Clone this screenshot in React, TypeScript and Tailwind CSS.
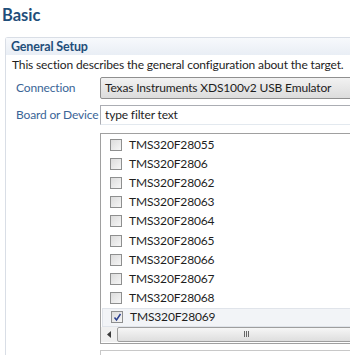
import React from "react";

const devices = [
  "TMS320F28055",
  "TMS320F2806",
  "TMS320F28062",
  "TMS320F28063",
  "TMS320F28064",
  "TMS320F28065",
  "TMS320F28066",
  "TMS320F28067",
  "TMS320F28068",
  "TMS320F28069",
];

const Checkbox = ({ checked }: { checked?: boolean }) => (
  <div className="w-[12px] h-[12px] border border-[#8e8f8f] bg-gradient-to-br from-[#dcdcdc] to-[#f6f6f6] flex items-center justify-center">
    {checked && (
      <svg width="9" height="9" viewBox="0 0 9 9">
        <path d="M1.5 4.5 L3.5 7 L7.5 1" stroke="#2a3f8f" strokeWidth="1.5" fill="none" />
      </svg>
    )}
  </div>
);

export default function App() {
  return (
    <div className="w-[350px] h-[355px] bg-white overflow-hidden font-['Lato',sans-serif] text-[12px] tracking-[-0.15px] text-[#1e1e1e] whitespace-nowrap">
      <div className="w-[362px]">
        <div className="pl-[2px] pt-[3px] h-[37px] text-[16.5px] font-bold tracking-normal text-[#1f4e7a]">Basic</div>
        <div className="ml-[5px] border-l border-t border-[#d9dee6] rounded-tl-[3px]">
          <div className="h-[17px] bg-gradient-to-b from-[#f7f9fc] to-[#e9eef5] pl-[5px] font-bold text-[12.5px] leading-[17px] text-[#1f4e7a]">
            General Setup
          </div>
          <div className="pl-[6px] pt-[1px] h-[21px] leading-[18px]">
            This section describes the general configuration about the target.
          </div>
          <div className="flex items-center h-[24px]">
            <div className="w-[94px] pl-[10px] text-[#3a6597]">Connection</div>
            <div className="flex-1 h-[22px] border border-[#8f8f8f] rounded-[2px] bg-gradient-to-b from-[#f2f2f2] to-[#dcdcdc] flex items-center pl-[4px]">
              Texas Instruments XDS100v2 USB Emulator
            </div>
          </div>
          <div className="flex items-center h-[26px] mt-[2px]">
            <div className="w-[94px] pl-[10px] text-[#3a6597]">Board or Device</div>
            <div className="flex-1 h-[20px] border border-[#abadb3] border-b-[#e3e9ef] flex items-center pl-[4px]">
              type filter text
            </div>
          </div>
          <div className="ml-[94px] mt-[5px] h-[211px] border border-[#a0a0a0] flex flex-col">
            <div className="flex-1 pt-[1px]">
              {devices.map((d, i) => {
                const sel = i === devices.length - 1;
                return (
                  <div
                    key={d}
                    className={
                      "h-[19.2px] flex items-center gap-[7px] " +
                      (sel ? "bg-[#f2f4f7] border border-[#e0e4ea] mx-[1px] pl-[8px]" : "pl-[9px]")
                    }
                  >
                    <Checkbox checked={sel} />
                    <span>{d}</span>
                  </div>
                );
              })}
            </div>
            <div className="h-[16px] mb-[1px] flex items-center bg-[#f0f0f0]">
              <div className="w-[16px] flex justify-center">
                <svg width="4" height="7" viewBox="0 0 4 7">
                  <path d="M4 0 L0 3.5 L4 7 Z" fill="#3a3a3a" />
                </svg>
              </div>
              <div className="flex-1 h-[15px] border border-[#9e9e9e] rounded-[2px] bg-gradient-to-b from-[#f6f6f6] to-[#dedede] flex items-center pl-[126px]">
                <div className="flex gap-[1px]">
                  <div className="w-[1px] h-[6px] bg-[#666]" />
                  <div className="w-[1px] h-[6px] bg-[#666]" />
                  <div className="w-[1px] h-[6px] bg-[#666]" />
                </div>
              </div>
            </div>
          </div>
          <div className="ml-[94px] mt-[6px] h-[10px] border-t border-l border-[#c8c8c8]" />
        </div>
      </div>
    </div>
  );
}
